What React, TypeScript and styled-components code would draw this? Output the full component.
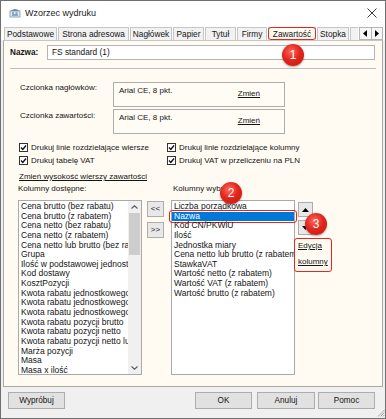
import React from 'react';
import styled, { createGlobalStyle } from 'styled-components';

const FONT = `"Liberation Sans", Arial, sans-serif`;
const RED = '#e4261f';

const GlobalStyle = createGlobalStyle`
  html, body { margin: 0; padding: 0; background: #ffffff; }
  body { font-family: ${FONT}; }
  * { box-sizing: border-box; }
`;

const Window = styled.div`
  position: relative;
  width: 386px;
  height: 419px;
  border: 1px solid #6f6f6f;
  background: #f0f0f0;
  font-family: ${FONT};
  font-size: 8px;
  color: #141414;
  display: flex;
  flex-direction: column;
  overflow: hidden;
`;

const TitleBar = styled.div`
  height: 23px;
  flex: none;
  background: #ffffff;
  display: flex;
  align-items: center;
  padding-left: 8px;
`;

const TitleText = styled.span`
  font-size: 9px;
  color: #1a1a1a;
  margin-left: 4px;
`;

const CloseButton = styled.div`
  margin-left: auto;
  margin-right: 8px;
  width: 10px;
  height: 10px;
  display: flex;
`;

const TabStrip = styled.div`
  height: 16px;
  flex: none;
  background: #ffffff;
  display: flex;
  align-items: flex-end;
  gap: 1px;
  padding-left: 3px;
`;

const Tab = styled.div<{ $w: number; $active?: boolean }>`
  position: relative;
  width: ${(p) => p.$w}px;
  height: 13px;
  border: 1px solid #c6c6c6;
  border-bottom: none;
  background: ${(p) => (p.$active ? '#fffbf2' : '#f2f2f2')};
  font-size: 8.3px;
  line-height: 12px;
  text-align: center;
  white-space: nowrap;
  overflow: visible;
  ${(p) =>
    p.$active
      ? `&::after { content: ''; position: absolute; left: -1px; top: -1px; right: -1px; bottom: 0; border: 1.5px solid ${RED}; border-radius: 3px; }`
      : ''}
`;

const PartialTab = styled.div`
  width: 8px;
  height: 13px;
  border-left: 1px solid #c6c6c6;
  border-top: 1px solid #c6c6c6;
  background: #f2f2f2;
`;

const TabArrows = styled.div`
  width: 24px;
  height: 13px;
  display: flex;
  align-self: flex-end;
`;

const TabArrow = styled.div`
  flex: 1;
  border: 1px solid #b5b5b5;
  background: #f7f7f7;
  display: flex;
  align-items: center;
  justify-content: center;
  & + & { border-left: none; }
`;

const Panel = styled.div`
  height: 347px;
  flex: none;
  margin: 0 2px;
  border: 1px solid #a9a9a9;
  border-top-color: #c6c6c6;
  background: #fffbf2;
  display: flex;
  flex-direction: column;
`;

const NameRow = styled.div`
  margin-top: 4px;
  padding-left: 6px;
  display: flex;
  align-items: center;
`;

const NameLabel = styled.span`
  width: 37px;
  font-weight: bold;
  font-size: 8.2px;
`;

const TextInput = styled.div`
  width: 328px;
  height: 15px;
  border: 1px solid #b4b4b4;
  background: #ffffff;
  padding-left: 4px;
  line-height: 13px;
  font-size: 8.3px;
`;

const Separator = styled.div`
  margin: 8px 6px 0;
  height: 2px;
  border-top: 1px solid #bdbdbd;
  border-bottom: 1px solid #ffffff;
`;

const FontGrid = styled.div`
  margin-top: 12px;
  padding-left: 16px;
  display: grid;
  grid-template-columns: 93px 172px;
  grid-auto-rows: 25px;
  row-gap: 2px;
`;

const FontLabel = styled.span<{ $pt?: number }>`
  line-height: 10px;
  padding-top: ${(p) => p.$pt ?? 1}px;
`;

const FontBox = styled.div`
  border: 1px solid #adadad;
  background: #fffcf6;
  display: flex;
  padding-left: 5px;
`;

const FontValue = styled.span`
  line-height: 10px;
  padding-top: 3px;
`;

const Link = styled.span`
  text-decoration: underline;
  line-height: 10px;
  color: #141414;
`;

const ChangeLink = styled(Link)`
  margin-left: auto;
  margin-right: 24px;
  padding-top: 6px;
`;

const CheckGrid = styled.div`
  margin-top: 7px;
  padding-left: 15px;
  display: grid;
  grid-template-columns: 148px auto;
  grid-auto-rows: 13px;
`;

const CheckItem = styled.label`
  display: flex;
  align-items: center;
  white-space: nowrap;
`;

const CheckBox = styled.span`
  width: 9px;
  height: 9px;
  border: 1px solid #333333;
  background: #ffffff;
  margin-right: 3px;
  display: flex;
  align-items: center;
  justify-content: center;
`;

const HeightLink = styled(Link)`
  display: block;
  margin-top: 5px;
  margin-left: 15px;
`;

const ColumnsArea = styled.div`
  margin-top: 2px;
  padding-left: 14px;
  display: flex;
  align-items: flex-start;
`;

const ListColumn = styled.div<{ $ml?: number }>`
  width: 124px;
  margin-left: ${(p) => p.$ml ?? 0}px;
  display: flex;
  flex-direction: column;
`;

const ColumnLabel = styled.span<{ $pl?: number }>`
  height: 10px;
  line-height: 10px;
  padding-left: ${(p) => p.$pl ?? 0}px;
  white-space: nowrap;
`;

const ListBox = styled.div`
  margin-top: 6px;
  height: 175px;
  border: 1px solid #a9a9a9;
  background: #ffffff;
  display: flex;
`;

const Items = styled.div<{ $clip?: boolean }>`
  flex: 1;
  min-width: 0;
  padding-top: 1px;
  overflow: ${(p) => (p.$clip ? 'hidden' : 'visible')};
`;

const ItemRow = styled.div<{ $selected?: boolean }>`
  position: relative;
  height: 9.65px;
  ${(p) =>
    p.$selected
      ? `&::after { content: ''; position: absolute; left: -3px; right: -3px; top: -2px; bottom: -1.5px; border: 1.5px solid ${RED}; border-radius: 3px; }`
      : ''}
`;

const ItemText = styled.div<{ $selected?: boolean }>`
  height: 9.65px;
  line-height: 9.65px;
  font-size: 8.5px;
  padding-left: 2px;
  white-space: nowrap;
  overflow: hidden;
  background: ${(p) => (p.$selected ? '#0078d7' : 'transparent')};
  color: ${(p) => (p.$selected ? '#ffffff' : '#141414')};
`;

const ScrollBar = styled.div`
  width: 13px;
  flex: none;
  background: #f0f0f0;
  display: flex;
  flex-direction: column;
`;

const ScrollArrow = styled.div`
  height: 12px;
  display: flex;
  align-items: center;
  justify-content: center;
`;

const ScrollThumb = styled.div`
  height: 42px;
  margin: 0 1px;
  background: #cdcdcd;
`;

const ScrollTrack = styled.div`
  flex: 1;
`;

const MoveColumn = styled.div`
  margin-left: 5px;
  padding-top: 17px;
  display: flex;
  flex-direction: column;
  gap: 5px;
`;

const SmallButton = styled.div<{ $w: number; $h: number }>`
  width: ${(p) => p.$w}px;
  height: ${(p) => p.$h}px;
  border: 1px solid #adadad;
  background: #e8e8e8;
  display: flex;
  align-items: center;
  justify-content: center;
  font-size: 8px;
  line-height: 1;
`;

const SideColumn = styled.div`
  margin-left: 3px;
  padding-top: 18px;
  display: flex;
  flex-direction: column;
  gap: 3px;
`;

const EditLink = styled.div`
  position: relative;
  margin-top: 3px;
  display: flex;
  flex-direction: column;
  gap: 6px;
  align-self: flex-start;
  &::after {
    content: '';
    position: absolute;
    left: -4px;
    top: -3px;
    right: -4px;
    bottom: -5px;
    border: 1.5px solid ${RED};
    border-radius: 3px;
  }
`;

const Footer = styled.div`
  flex: 1;
  display: flex;
  align-items: flex-start;
  padding: 5px 0 0 7px;
`;

const DialogButton = styled.div<{ $w: number; $ml?: number }>`
  width: ${(p) => p.$w}px;
  height: 17px;
  margin-left: ${(p) => p.$ml ?? 0}px;
  border: 1px solid #adadad;
  background: #e1e1e1;
  display: flex;
  align-items: center;
  justify-content: center;
  font-size: 8.2px;
`;

const Spacer = styled.div`
  flex: 1;
`;

const Grip = styled.div`
  margin-left: 2px;
  align-self: flex-end;
  width: 8px;
  height: 8px;
  margin-bottom: 1px;
  display: flex;
`;

const Badge = styled.div<{ $x: number; $y: number }>`
  position: absolute;
  left: ${(p) => p.$x - 12}px;
  top: ${(p) => p.$y - 12}px;
  width: 22px;
  height: 22px;
  border-radius: 50%;
  background: radial-gradient(circle at 42% 35%, #ff6a5c 0%, #e3261d 45%, #c01610 100%);
  box-shadow: 0 1px 2px rgba(0, 0, 0, 0.35);
  color: #ffffff;
  font-family: ${FONT};
  font-size: 12px;
  display: flex;
  align-items: center;
  justify-content: center;
`;

const tabs = [
  { label: 'Podstawowe', w: 53 },
  { label: 'Strona adresowa', w: 71 },
  { label: 'Nagłówek', w: 42 },
  { label: 'Papier', w: 31 },
  { label: 'Tytuł', w: 31 },
  { label: 'Firmy', w: 30 },
  { label: 'Zawartość', w: 48, active: true },
  { label: 'Stopka', w: 32 },
];

const leftItems = [
  'Cena brutto (bez rabatu)',
  'Cena brutto (z rabatem)',
  'Cena netto (bez rabatu)',
  'Cena netto (z rabatem)',
  'Cena netto lub brutto (bez rabatu)',
  'Grupa',
  'Ilość w podstawowej jednostce miary',
  'Kod dostawy',
  'KosztPozycji',
  'Kwota rabatu jednostkowego brutto',
  'Kwota rabatu jednostkowego netto',
  'Kwota rabatu jednostkowego netto lub brutto',
  'Kwota rabatu pozycji brutto',
  'Kwota rabatu pozycji netto',
  'Kwota rabatu pozycji netto lub brutto',
  'Marża pozycji',
  'Masa',
  'Masa x ilość',
];

const rightItems = [
  'Liczba porządkowa',
  'Nazwa',
  'Kod CN/PKWiU',
  'Ilość',
  'Jednostka miary',
  'Cena netto lub brutto (z rabatem)',
  'StawkaVAT',
  'Wartość netto (z rabatem)',
  'Wartość VAT (z rabatem)',
  'Wartość brutto (z rabatem)',
];

const CheckMark = () => (
  <svg width="7" height="7" viewBox="0 0 7 7">
    <path d="M1 3.6 L2.8 5.4 L6 1.5" fill="none" stroke="#111" strokeWidth="1.4" />
  </svg>
);

const Check = ({ label }: { label: string }) => (
  <CheckItem>
    <CheckBox>
      <CheckMark />
    </CheckBox>
    {label}
  </CheckItem>
);

const AppIcon = () => (
  <svg width="12" height="10" viewBox="0 0 12 10">
    <rect x="1" y="3" width="10" height="6" fill="#dfe8ef" stroke="#7d96ab" strokeWidth="0.8" />
    <path d="M1.5 3 Q6 -1 10.5 3" fill="#5f8fb5" />
    <path d="M3 5 h2 M3 7 h6 M6.5 5 h2" stroke="#2f6a9a" strokeWidth="1" />
  </svg>
);

const Chevron = ({ up }: { up?: boolean }) => (
  <svg width="7" height="4" viewBox="0 0 7 4">
    <path d={up ? 'M0.5 3.5 L3.5 0.8 L6.5 3.5' : 'M0.5 0.5 L3.5 3.2 L6.5 0.5'} fill="none" stroke="#5a5a5a" strokeWidth="1.1" />
  </svg>
);

const Triangle = ({ dir }: { dir: 'up' | 'down' | 'left' | 'right' }) => {
  const d = {
    up: 'M0 5 L3.5 1 L7 5 Z',
    down: 'M0 1 L3.5 5 L7 1 Z',
    left: 'M5 0 L1 3.5 L5 7 Z',
    right: 'M1 0 L5 3.5 L1 7 Z',
  }[dir];
  const vertical = dir === 'up' || dir === 'down';
  return (
    <svg width={vertical ? 7 : 6} height={vertical ? 6 : 7} viewBox={vertical ? '0 0 7 6' : '0 0 6 7'}>
      <path d={d} fill="#000" />
    </svg>
  );
};

export default function App() {
  return (
    <>
      <GlobalStyle />
      <Window>
        <TitleBar>
          <AppIcon />
          <TitleText>Wzorzec wydruku</TitleText>
          <CloseButton>
            <svg width="10" height="10" viewBox="0 0 10 10">
              <path d="M0.5 0.5 L9.5 9.5 M9.5 0.5 L0.5 9.5" stroke="#222" strokeWidth="0.9" />
            </svg>
          </CloseButton>
        </TitleBar>

        <TabStrip>
          {tabs.map((t) => (
            <Tab key={t.label} $w={t.w} $active={t.active}>
              {t.label}
            </Tab>
          ))}
          <PartialTab />
          <TabArrows>
            <TabArrow>
              <Triangle dir="left" />
            </TabArrow>
            <TabArrow>
              <Triangle dir="right" />
            </TabArrow>
          </TabArrows>
        </TabStrip>

        <Panel>
          <NameRow>
            <NameLabel>Nazwa:</NameLabel>
            <TextInput>FS standard (1)</TextInput>
          </NameRow>
          <Separator />

          <FontGrid>
            <FontLabel>Czcionka nagłówków:</FontLabel>
            <FontBox>
              <FontValue>Arial CE, 8 pkt.</FontValue>
              <ChangeLink>Zmień</ChangeLink>
            </FontBox>
            <FontLabel $pt={2}>Czcionka zawartości:</FontLabel>
            <FontBox>
              <FontValue>Arial CE, 8 pkt.</FontValue>
              <ChangeLink>Zmień</ChangeLink>
            </FontBox>
          </FontGrid>

          <CheckGrid>
            <Check label="Drukuj linie rozdzielające wiersze" />
            <Check label="Drukuj linie rozdzielające kolumny" />
            <Check label="Drukuj tabelę VAT" />
            <Check label="Drukuj VAT w przeliczeniu na PLN" />
          </CheckGrid>

          <HeightLink>Zmień wysokość wierszy zawartości</HeightLink>

          <ColumnsArea>
            <ListColumn>
              <ColumnLabel>Kolumny dostępne:</ColumnLabel>
              <ListBox>
                <Items $clip>
                  {leftItems.map((it, i) => (
                    <ItemRow key={i}>
                      <ItemText>{it}</ItemText>
                    </ItemRow>
                  ))}
                </Items>
                <ScrollBar>
                  <ScrollArrow>
                    <Chevron up />
                  </ScrollArrow>
                  <ScrollThumb />
                  <ScrollTrack />
                  <ScrollArrow>
                    <Chevron />
                  </ScrollArrow>
                </ScrollBar>
              </ListBox>
            </ListColumn>

            <MoveColumn>
              <SmallButton $w={17} $h={16}>&lt;&lt;</SmallButton>
              <SmallButton $w={17} $h={16}>&gt;&gt;</SmallButton>
            </MoveColumn>

            <ListColumn $ml={7}>
              <ColumnLabel $pl={2}>Kolumny wybrane:</ColumnLabel>
              <ListBox>
                <Items>
                  {rightItems.map((it, i) => (
                    <ItemRow key={i} $selected={i === 1}>
                      <ItemText $selected={i === 1}>{it}</ItemText>
                    </ItemRow>
                  ))}
                </Items>
              </ListBox>
            </ListColumn>

            <SideColumn>
              <SmallButton $w={15} $h={15}>
                <Triangle dir="up" />
              </SmallButton>
              <SmallButton $w={15} $h={15}>
                <Triangle dir="down" />
              </SmallButton>
              <EditLink>
                <Link>Edycja</Link>
                <Link>kolumny</Link>
              </EditLink>
            </SideColumn>
          </ColumnsArea>
        </Panel>

        <Footer>
          <DialogButton $w={57}>Wypróbuj</DialogButton>
          <Spacer />
          <DialogButton $w={57}>OK</DialogButton>
          <DialogButton $w={58} $ml={5}>Anuluj</DialogButton>
          <DialogButton $w={57} $ml={3}>Pomoc</DialogButton>
          <Grip>
            <svg width="8" height="8" viewBox="0 0 8 8">
              <path d="M7.5 1 L1 7.5 M7.5 3.5 L3.5 7.5 M7.5 6 L6 7.5" stroke="#9a9a9a" strokeWidth="0.9" />
            </svg>
          </Grip>
        </Footer>

        <Badge $x={293} $y={55}>1</Badge>
        <Badge $x={231} $y={193}>2</Badge>
        <Badge $x={316} $y={224}>3</Badge>
      </Window>
    </>
  );
}
